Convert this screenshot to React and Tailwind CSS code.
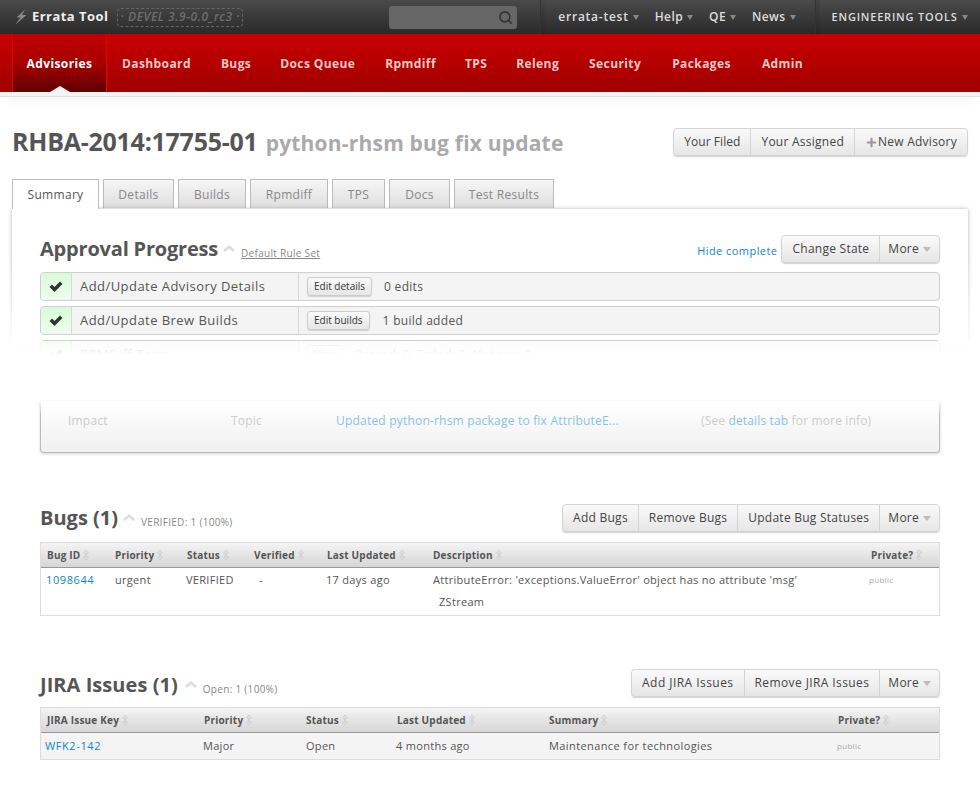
import { Search, Plus } from "lucide-react";

const FONT = "font-['Open_Sans','Noto_Sans',sans-serif]";

const SortIcon = () => (
  <svg width="6" height="10" viewBox="0 0 6 10" className="ml-[3px] inline-block shrink-0 text-[#ccc]">
    <path d="M3 0 L5.5 3 H3.6 V7 H5.5 L3 10 L0.5 7 H2.4 V3 H0.5 Z" fill="none" stroke="currentColor" strokeWidth="0.8" />
  </svg>
);

const Caret = ({ className }) => (
  <span className={`inline-block h-0 w-0 border-t-[5px] border-x-transparent ${className}`} />
);

const CollapseIcon = () => (
  <svg width="12" height="7" viewBox="0 0 12 7" className="shrink-0 text-[#dedede]">
    <path d="M0 5 L6 0 L12 5 L10 7 L6 3.5 L2 7 Z" fill="currentColor" />
  </svg>
);

const CheckIcon = () => (
  <svg width="14" height="11" viewBox="0 0 14 11" className="text-[#333]">
    <path d="M0.5 6 L3 3.5 L5.5 6 L11 0.5 L13.5 3 L5.5 11 Z" fill="currentColor" />
  </svg>
);

const BtnGroup = ({ items, className }) => (
  <div className={`flex h-[28px] rounded-[4px] border border-[#d4d4d4] bg-gradient-to-b from-[#fafafa] to-[#e6e6e6] text-[12px] tracking-[0.25px] text-[#444] shadow-[0_1px_1px_rgba(0,0,0,0.18)] ${className || ""}`}>
    {items.map((item, i) => (
      <div key={item.label} className={`flex items-center ${item.caret ? "px-[8px]" : "px-[10px]"} ${item.className || ""} ${i > 0 ? "border-l border-[#d4d4d4]" : ""}`}>
        {item.plus && <Plus size={13} strokeWidth={4} className="text-[#999]" />}
        {item.label}
        {item.caret && <Caret className="ml-[4px] border-x-[4px] border-t-[#bbb]" />}
      </div>
    ))}
  </div>
);

const TopMenu = ({ label, className }) => (
  <div className={`flex items-center font-semibold text-[#ddd] ${className}`}>
    {label}
    <Caret className="ml-[4px] mt-[1px] border-x-[3px] border-t-[#888]" />
  </div>
);

const navItems = [
  ["Dashboard", "ml-[15px]"],
  ["Bugs", "ml-[30px]"],
  ["Docs Queue", "ml-[29px]"],
  ["Rpmdiff", "ml-[30px]"],
  ["TPS", "ml-[29px]"],
  ["Releng", "ml-[29px]"],
  ["Security", "ml-[30px]"],
  ["Packages", "ml-[31px]"],
  ["Admin", "ml-[31px]"],
];

const tabs = [
  ["Details", "w-[71px]"],
  ["Builds", "w-[68px]"],
  ["Rpmdiff", "w-[78px]"],
  ["TPS", "w-[53px]"],
  ["Docs", "w-[61px]"],
  ["Test Results", "w-[100px]"],
];

const ProgressRow = ({ title, button, note, noteClass }) => (
  <div className="flex h-[29px] overflow-hidden rounded-[4px] border border-[#d0d0d0] bg-[#f4f4f4]">
    <div className="flex w-[31px] items-center justify-center border-r border-[#d8d8d8] bg-gradient-to-b from-[#d9fbd9] to-[#eefdee]">
      <CheckIcon />
    </div>
    <div className="flex w-[227px] items-center border-r border-[#d8d8d8] pl-[8px] text-[13px] tracking-[0.45px] text-[#555]">{title}</div>
    <div className="flex items-center pl-[8px] text-[12px] tracking-[0.3px] text-[#555]">
      <div className="flex h-[19px] items-center rounded-[3px] border border-[#ccc] bg-gradient-to-b from-[#fafafa] to-[#e6e6e6] px-[6px] text-[10px] tracking-normal text-[#333] shadow-[0_1px_1px_rgba(0,0,0,0.15)]">{button}</div>
      <span className={noteClass}>{note}</span>
    </div>
  </div>
);

const SectionHead = ({ title, sub, titleClass, leftClass, collapseClass, children }) => (
  <div className="flex items-center justify-between">
    <div className={`flex items-center ${leftClass || ""}`}>
      <h2 className={`text-[20px] font-bold leading-[28px] text-[#555] ${titleClass || ""}`}>{title}</h2>
      <span className={`mt-[-2px] ${collapseClass || "ml-[5px]"}`}><CollapseIcon /></span>
      <span className="ml-[6px] mt-[8px] text-[10px] tracking-[0.3px] text-[#888]">{sub}</span>
    </div>
    {children}
  </div>
);

const TableHead = ({ columns, template }) => (
  <div className={`grid h-[25px] items-center border-b border-b-[#999] bg-gradient-to-b from-[#f4f4f4] to-[#d6d6d6] text-[10px] font-bold tracking-[0.2px] text-[#555] ${template}`}>
    {columns.map((c) => (
      <div key={c} className="flex items-center whitespace-nowrap">{c}<SortIcon /></div>
    ))}
  </div>
);

export default function App() {
  return (
    <div className={`${FONT} h-[809px] w-[980px] overflow-hidden bg-white`}>
      {/* black bar */}
      <div className="flex h-[34px] items-center bg-gradient-to-b from-[#4a4a4a] to-[#2a2a2a] text-[12px] tracking-[0.4px]">
        <svg width="12" height="16" viewBox="0 0 12 16" className="ml-[15px] text-[#888]">
          <path d="M10.5 0 L1.5 8.5 L5.5 8.5 L0.5 15.5 L11.5 6 L7 6 Z" fill="currentColor" />
        </svg>
        <div className="ml-[5px] text-[13px] font-bold tracking-[0.45px] text-[#eee]">Errata Tool</div>
        <div className="ml-[9px] flex h-[19px] w-[126px] items-center justify-center whitespace-nowrap rounded-[4px] border border-dashed border-[#666] text-[12px] font-semibold italic tracking-[0.55px] text-[#6e6e6e]">· DEVEL 3.9-0.0_rc3 ·</div>
        <div className="ml-[146px] flex h-[23px] w-[128px] items-center justify-end rounded-[3px] bg-[#666] pr-[4px]">
          <Search size={15} strokeWidth={2.5} className="text-[#333]" />
        </div>
        <div className="ml-[23px] h-[34px] w-px bg-[#333] shadow-[2px_0_3px_rgba(0,0,0,0.3)]" />
        <TopMenu label="errata-test" className="ml-[17px] tracking-[0.75px]" />
        <TopMenu label="Help" className="ml-[16px]" />
        <TopMenu label="QE" className="ml-[16px]" />
        <TopMenu label="News" className="ml-[16px]" />
        <div className="ml-[19px] h-[34px] w-px bg-[#333] shadow-[2px_0_3px_rgba(0,0,0,0.3)]" />
        <TopMenu label="ENGINEERING TOOLS" className="ml-[16px] text-[11px] tracking-[0.8px]" />
      </div>

      {/* red nav */}
      <div className="flex h-[58px] bg-gradient-to-b from-[#c90000] to-[#a00000] pl-[12px] text-[12px] font-bold tracking-[0.4px] text-[#f2c8c8] shadow-[0_4px_0_#f3f3f3,0_5px_0_#e0e0e0,0_14px_12px_-6px_rgba(0,0,0,0.05)]">
        <div className="relative flex w-[95px] items-center justify-center border-x border-[#e00000] bg-gradient-to-b from-[#c00000] via-[#a80000] to-[#600000] pt-[2px] text-white">
          Advisories
          <span className="absolute bottom-0 left-[37px] h-0 w-0 border-x-[10px] border-b-[6px] border-x-transparent border-b-[#f4f4f4]" />
        </div>
        {navItems.map(([label, cls]) => (
          <div key={label} className={`flex items-center pt-[2px] ${cls}`}>{label}</div>
        ))}
      </div>

      {/* title */}
      <div className="flex items-center justify-between pl-[12px] pr-[12px] pt-[35px]">
        <h1 className="flex items-baseline text-[25px] font-bold leading-[28px] tracking-[-0.25px] text-[#555]">
          RHBA-2014:17755-01
          <span className="ml-[8px] text-[21px] tracking-[0.2px] text-[#aaa]">python-rhsm bug fix update</span>
        </h1>
        <BtnGroup items={[{ label: "Your Filed", className: "tracking-[0.05px]" }, { label: "Your Assigned" }, { label: "New Advisory", plus: true }]} />
      </div>

      {/* tabs */}
      <div className="mt-[22px] flex pl-[12px] text-[12px] tracking-[0.3px]">
        <div className="z-10 mr-[4px] flex h-[30px] w-[87px] items-center justify-center border border-b-0 border-[#bbb] bg-white text-[#555]">Summary</div>
        {tabs.map(([label, width]) => (
          <div key={label} className={`mr-[4px] flex h-[29px] items-center justify-center border border-b-0 border-[#bbb] bg-gradient-to-b from-[#f6f6f6] to-[#dedede] pt-[2px] text-[#888] ${width}`}>{label}</div>
        ))}
      </div>

      {/* summary panel, the middle of it fades out */}
      <div className="relative">
        <div className="mx-[12px] h-[142px] bg-white px-[28px] pt-[26px] shadow-[0_0_4px_rgba(0,0,0,0.3)]">
          <SectionHead title="Approval Progress" titleClass="tracking-[-0.2px]" sub={<span className="underline">Default Rule Set</span>}>
            <div className="flex items-center">
              <span className="mr-[4px] mt-[5px] text-[11px] tracking-[0.45px] text-[#0d87cb]">Hide complete</span>
              <BtnGroup items={[{ label: "Change State" }, { label: "More", caret: true }]} />
            </div>
          </SectionHead>
          <div className="mt-[9px] flex flex-col gap-[5px]">
            <ProgressRow title="Add/Update Advisory Details" button="Edit details" note="0 edits" noteClass="ml-[12px]" />
            <ProgressRow title="Add/Update Brew Builds" button="Edit builds" note="1 build added" noteClass="ml-[13px]" />
            <ProgressRow title="RPMDiff Tests" button="View" note="Passed: 0, Failed: 0, Not run: 0" noteClass="ml-[12px]" />
          </div>
        </div>
        <div className="absolute bottom-[-2px] left-0 top-[52px] w-[12px] bg-gradient-to-b from-white/0 to-white" />
        <div className="absolute bottom-[-2px] right-0 top-[52px] w-[12px] bg-gradient-to-b from-white/0 to-white" />
        <div className="absolute inset-x-0 top-[132px] h-[40px] bg-gradient-to-b from-white/70 via-white via-[35%] to-white" />
      </div>

      {/* tail of the faded panel */}
      <div className="relative mx-[40px] mt-[50px] flex h-[52px] items-center rounded-b-[4px] border-x border-b border-[#bbb] bg-gradient-to-b from-white to-[#f0f0f0] pb-[12px] text-[12px] tracking-[0.2px] text-[#ccc] shadow-[0_1px_3px_rgba(0,0,0,0.18)]">
        <span className="absolute left-[27px]">Impact</span>
        <span className="absolute left-[190px]">Topic</span>
        <span className="absolute left-[295px] text-[#85c4e8]">Updated python-rhsm package to fix AttributeE...</span>
        <span className="absolute left-[660px] tracking-[0.15px]">(See <span className="text-[#85c4e8]">details tab</span> for more info)</span>
        <div className="absolute inset-x-[-1px] top-0 h-[14px] bg-gradient-to-b from-white to-white/0" />
      </div>

      {/* bugs */}
      <div className="mx-[40px] mt-[51px]">
        <SectionHead title="Bugs (1)" sub="VERIFIED: 1 (100%)">
          <BtnGroup items={[{ label: "Add Bugs" }, { label: "Remove Bugs" }, { label: "Update Bug Statuses" }, { label: "More", caret: true }]} />
        </SectionHead>
        <div className="mt-[10px] border border-[#ddd]">
          <TableHead
            template="grid-cols-[68px_72px_67px_73px_106px_438px_1fr] pl-[6px]"
            columns={["Bug ID", "Priority", "Status", "Verified", "Last Updated", "Description", "Private?"]}
          />
          <div className="grid h-[47px] grid-cols-[69px_71px_67px_73px_107px_436px_1fr] pl-[5px] pt-[1px] text-[11px] leading-[22px] tracking-[0.3px] text-[#555]">
            <span className="tracking-[0.6px] text-[#0d87cb]">1098644</span>
            <span>urgent</span>
            <span>VERIFIED</span>
            <span className="pl-[6px]">-</span>
            <span>17 days ago</span>
            <div className="whitespace-nowrap">
              AttributeError: 'exceptions.ValueError' object has no attribute 'msg'
              <div className="pl-[6px]">ZStream</div>
            </div>
            <span className="text-[8px] text-[#aaa]">public</span>
          </div>
        </div>
      </div>

      {/* jira */}
      <div className="mx-[40px] mt-[51px]">
        <SectionHead title="JIRA Issues (1)" titleClass="tracking-[0.05px]" collapseClass="ml-[7px]" leftClass="mt-[4px]" sub="Open: 1 (100%)">
          <BtnGroup items={[{ label: "Add JIRA Issues", className: "tracking-[0.45px]" }, { label: "Remove JIRA Issues", className: "tracking-[0.4px]" }, { label: "More", caret: true }]} />
        </SectionHead>
        <div className="mt-[8px] border border-[#ddd]">
          <TableHead
            template="grid-cols-[157px_102px_91px_152px_289px_1fr] pl-[6px]"
            columns={["JIRA Issue Key", "Priority", "Status", "Last Updated", "Summary", "Private?"]}
          />
          <div className="grid h-[26px] grid-cols-[158px_103px_90px_153px_288px_1fr] items-center bg-[#f4f4f4] pl-[4px] text-[11px] tracking-[0.3px] text-[#555]">
            <span className="tracking-[0.6px] text-[#0d87cb]">WFK2-142</span>
            <span>Major</span>
            <span>Open</span>
            <span>4 months ago</span>
            <span className="tracking-[0.4px]">Maintenance for technologies</span>
            <span className="text-[8px] text-[#aaa]">public</span>
          </div>
        </div>
      </div>
    </div>
  );
}
